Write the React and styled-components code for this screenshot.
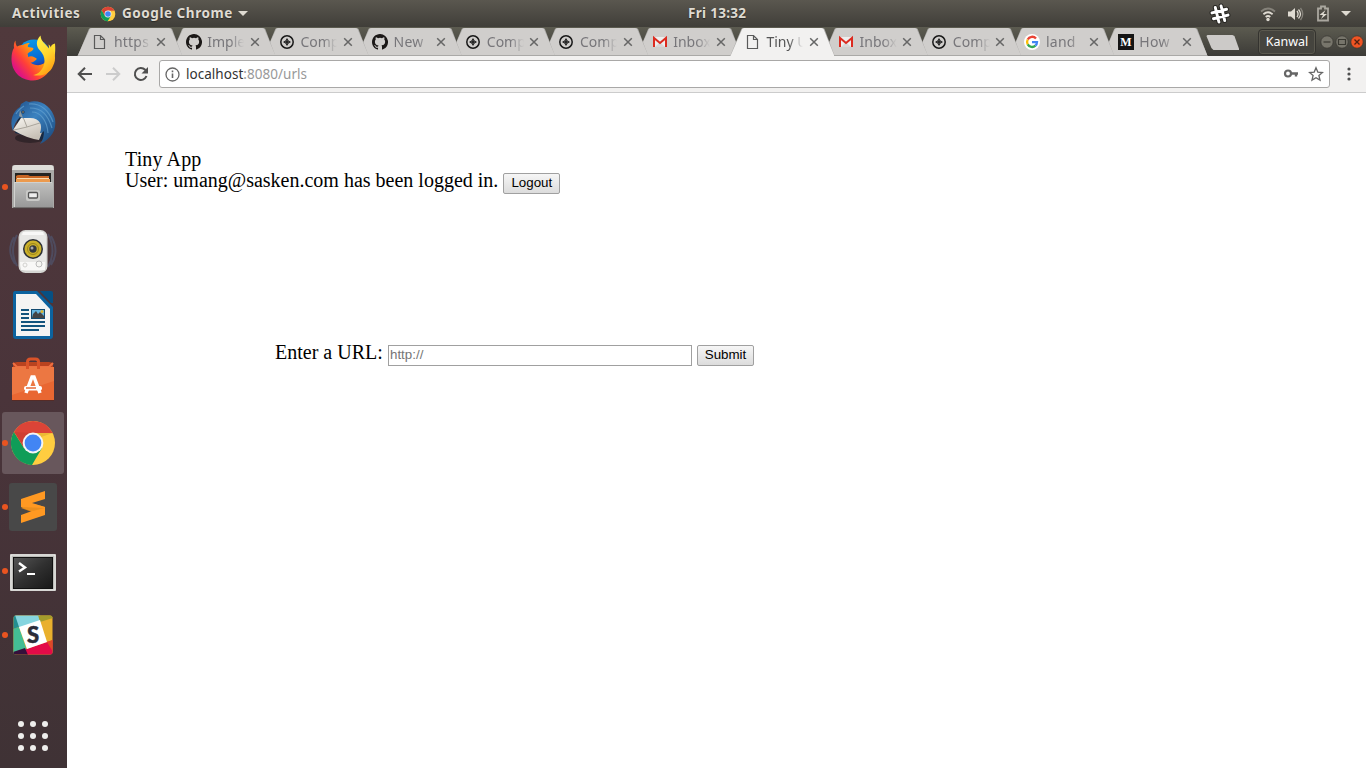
import React from 'react';
import styled, { createGlobalStyle } from 'styled-components';

const GlobalStyle = createGlobalStyle`
  * { box-sizing: border-box; }
  html, body { margin: 0; padding: 0; overflow: hidden; }
  svg { display: block; flex: none; }
`;

const Desktop = styled.div`
  width: 1366px;
  height: 768px;
  display: flex;
  flex-direction: column;
  font-family: "Noto Sans", "Open Sans", sans-serif;
  background: #fff;
`;

const TopBar = styled.header`
  height: 27px;
  flex: none;
  display: grid;
  grid-template-columns: 688px 60px 1fr;
  align-items: center;
  padding: 0 15px 0 0;
  background: linear-gradient(#5a574f, #403e39);
  color: #dfdbd2;
  font-size: 13.5px;
  font-weight: 700;
  line-height: 26px;
`;

const BarGroup = styled.div`
  display: flex;
  align-items: center;
  justify-content: ${p => (p.$end ? 'flex-end' : 'flex-start')};
  padding-left: ${p => (p.$end ? 0 : 12)}px;
`;

const BarLabel = styled.span`
  white-space: nowrap;
  width: ${p => p.$width}px;
  letter-spacing: ${p => p.$spacing || 0}px;
  margin-left: ${p => p.$left || 0}px;
  padding-bottom: 1px;
  text-shadow: 0 1px 1px #2a2925;
`;

const Arrow = styled.span`
  width: 0;
  height: 0;
  margin-left: ${p => p.$left}px;
  border: 5px solid transparent;
  border-top-color: #dfdbd2;
  border-bottom-width: 0;
`;

const IconSlot = styled.span`
  display: flex;
  margin-left: ${p => p.$left || 0}px;
`;

const Main = styled.div`
  flex: 1;
  display: flex;
  min-height: 0;
`;

const Dock = styled.nav`
  width: 67px;
  flex: none;
  display: flex;
  flex-direction: column;
  gap: 2px;
  padding: 1px 3px 0 2px;
  background: linear-gradient(#50393c, #4a343a 50%, #3f3235);
`;

const DockItem = styled.div`
  position: relative;
  width: 62px;
  height: 62px;
  display: flex;
  align-items: center;
  justify-content: center;
  border-radius: 3px;
  background: ${p => (p.$active ? '#68575c' : 'transparent')};
`;

const RunningDot = styled.span`
  position: absolute;
  left: 0;
  top: 28px;
  width: 6px;
  height: 6px;
  border-radius: 50%;
  background: #e95420;
`;

const AppsGrid = styled.div`
  display: grid;
  grid-template-columns: repeat(3, 6px);
  gap: 6px;
  margin: auto auto 17px 16px;
`;

const AppsDot = styled.span`
  width: 6px;
  height: 6px;
  border-radius: 50%;
  background: #eeeeec;
`;

const Browser = styled.section`
  flex: 1;
  min-width: 0;
  display: flex;
  flex-direction: column;
`;

const TabStrip = styled.div`
  height: 29px;
  flex: none;
  display: flex;
  padding: 1px 2px 0 10px;
  isolation: isolate;
  background: linear-gradient(#5c5b50, #3c3b37);
`;

const TabShape = styled.div`
  position: relative;
  width: 106px;
  height: 28px;
  flex: none;
  margin-right: -12.8px;
  padding: 0 0 0 15.3px;
  display: flex;
  align-items: center;
  z-index: ${p => p.$z};
  &::before, &::after {
    content: "";
    position: absolute;
    z-index: -1;
    inset: 0;
    background: #aaa9a7;
    clip-path: polygon(0 100%, 1px 97%, 12px 3%, 14px 0, 93px 0, 95px 3%, 105px 97%, 106px 100%);
  }
  &::after {
    inset: ${p => (p.$active ? '0 1px 0 1px' : '0 1px 1px 1px')};
    background: ${p => (p.$active ? '#f2f1f0' : '#d0cecc')};
    clip-path: polygon(0 100%, 12px 2%, 14px 0, 91px 0, 93px 3%, 104px 100%);
  }
`;

const TabTitle = styled.span`
  width: 37px;
  margin-left: 5.7px;
  padding-bottom: 1px;
  overflow: hidden;
  white-space: nowrap;
  font-size: 14px;
  line-height: 20px;
  letter-spacing: ${p => p.$spacing}px;
  color: ${p => (p.$active ? '#555' : '#77767a')};
  mask-image: linear-gradient(90deg, #000 62%, transparent 100%);
`;

const NewTab = styled.span`
  width: 33px;
  height: 15px;
  margin: 7px 0 0 11px;
  background: #cccac8;
  clip-path: polygon(0 1px, 1px 0, 26px 0, 28px 1px, 33px 15px, 7px 15px, 5px 13px);
`;

const WindowControls = styled.div`
  display: flex;
  align-items: center;
  gap: 1px;
  margin-left: auto;
`;

const ProfileButton = styled.div`
  width: 58px;
  height: 26px;
  margin-right: 3px;
  border: 1px solid #34332f;
  border-radius: 4px;
  box-shadow: inset 0 0 0 1px #5b594f;
  background: #45443e;
  color: #fff;
  font-size: 12.5px;
  line-height: 24px;
  text-align: center;
`;

const Toolbar = styled.div`
  height: 37px;
  flex: none;
  display: flex;
  align-items: center;
  padding: 0 10px;
  background: #f2f1f0;
  border-bottom: 1px solid #ccc;
`;

const Omnibox = styled.div`
  width: 1171px;
  height: 28px;
  margin-left: 10px;
  padding: 0 5px;
  display: flex;
  align-items: center;
  border: 1px solid #a9a8a7;
  border-radius: 3px;
  background: #fff;
`;

const Address = styled.span`
  flex: 1;
  margin-left: 6px;
  font-size: 13.5px;
  line-height: 20px;
  letter-spacing: 0.03px;
  color: #999;
  b { font-weight: 400; color: #333; }
`;

const Page = styled.main`
  flex: 1;
  padding: 56px 0 0 58px;
  background: #fff;
  color: #000;
  font-family: "Liberation Serif", serif;
  font-size: 20px;
`;

const TextLine = styled.div`
  height: 21px;
  line-height: 21px;
  display: flex;
  white-space: pre;
`;

const Heading = styled(TextLine)`
  letter-spacing: 0.12px;
`;

const UrlForm = styled.div`
  display: flex;
  height: 24px;
  margin: 151px 0 0 150px;
  line-height: 21px;
`;

const PlainButton = styled.button`
  width: 57px;
  height: 21px;
  margin: 3px 0 0 5px;
  padding: 0 0 2px;
  flex: none;
  border: 1px solid #a0a0a0;
  border-radius: 2px;
  background: linear-gradient(#f6f6f6, #dcdcdc);
  color: #000;
  font: 13.333px/17px "Liberation Sans", sans-serif;
`;

const UrlInput = styled.input`
  width: 304px;
  height: 21px;
  margin: 3px 0 0;
  padding: 0 1px 2px;
  border: 1px solid #a0a0a0;
  font: 13.333px "Liberation Sans", sans-serif;
  &::placeholder { color: #757575; }
`;

const FormLabel = styled.label`
  width: 113px;
`;

const ChromeLogo = ({ size }) => (
  <svg width={size} height={size} viewBox="0 0 48 48">
    <circle cx="24" cy="24" r="22" fill="#ffcd40" />
    <path d="M4.900 13A22 22 0 0 1 43.100 13L44 14H24L15 19Z" fill="#db4437" />
    <path d="M4.900 13A22 22 0 0 0 23 46L33 29 24 24 15 29Z" fill="#0f9d58" />
    <path d="M5 13 15 29V19L24 14Z" fill="#cf3f33" />
    <path d="M24 14h20l-12 4Z" fill="#d9a52a" opacity=".5" />
    <circle cx="24" cy="24" r="10.400" fill="#f5f5f5" />
    <circle cx="24" cy="24" r="8.400" fill="#4285f4" />
  </svg>
);

const Firefox = () => (
  <svg width="48" height="48" viewBox="0 0 48 48">
    <defs>
      <linearGradient id="ffBody" x1="0.9" y1="0.1" x2="0.1" y2="0.7">
        <stop offset="0" stopColor="#ffdf30" /><stop offset=".45" stopColor="#ff930f" />
        <stop offset=".75" stopColor="#ff4038" /><stop offset="1" stopColor="#e01580" />
      </linearGradient>
      <linearGradient id="ffBlue" x1="0" y1="0" x2=".3" y2="1">
        <stop offset="0" stopColor="#0aa2ea" /><stop offset=".7" stopColor="#0867d2" /><stop offset="1" stopColor="#3b1686" />
      </linearGradient>
      <linearGradient id="ffTail" x1=".2" y1="0" x2=".7" y2="1">
        <stop offset="0" stopColor="#fff44f" /><stop offset=".55" stopColor="#ffd52c" /><stop offset="1" stopColor="#ff9a12" />
      </linearGradient>
    </defs>
    <circle cx="25" cy="22" r="17.500" fill="url(#ffBlue)" />
    <path d="M6.500 5.500c0 3 .5 4.500 1.500 6q3-2 6-1.500c2-1.500 4.500-2 7-2-2 1.500-2.500 3-2 4 2 .8 4.500 0 5.500 1.500-.5 3-4.500 3-6 5.500 1 2 .5 3 .5 3 4-2 7 .5 9 2-2 1.500-3 3.500-6.500 3.500 5 4 13 4 17-3 4-8 1-15 7.500-16C48 29 38 45.500 24 45.500 11 45.500 2.500 36 2.500 24c0-5 1-9 2.500-11-.5-3 0-5.500 1.500-7.500Z" fill="url(#ffBody)" />
    <path d="M31.500.500c-5 5-4.500 11-.5 15 6 6 6 15 0 21-2 2-5 3.500-7 3.500 8 2 17-1 20-9 4-7 1.500-15-2-18.500-.5-1-1.500-2.500-2.500-3 .5 2 .5 3 .5 4C37 9 32 7 31.500.500Z" fill="url(#ffTail)" />
  </svg>
);

const Thunderbird = () => (
  <svg width="48" height="48" viewBox="0 0 48 48">
    <defs>
      <linearGradient id="bird" x1="0" y1="0" x2="1" y2="1"><stop offset="0" stopColor="#1e4e87" /><stop offset=".45" stopColor="#3b82c0" /><stop offset="1" stopColor="#174274" /></linearGradient>
      <linearGradient id="letter" x2=".5" y2="1"><stop offset="0" stopColor="#fffdf8" /><stop offset="1" stopColor="#c7c0b6" /></linearGradient>
    </defs>
    <ellipse cx="21" cy="39" rx="15" ry="5" fill="#241b20" opacity=".65" />
    <path d="m10 14 26-1 3 14-6 14L6 34Z" fill="#172a43" />
    <path d="M4 31 14 16q11-3 20 4l2 6-6 15Q17 39 4 31Z" fill="url(#letter)" />
    <path d="m14 18 4 10 16-5M18 28 5 31" stroke="#aaa59c" strokeWidth="1" fill="none" />
    <path d="M4 32C0 22 4 12 11 8l1-3 5-3 3 1C32 0 43 8 46 20c2 11-4 20-15 25 3-4 4-8 4-13-2 2-3 2-4 2 3-8 0-15-10-15l-7 0c-1 1-3-1-3-1-4 4-6 8-7 14Z" fill="url(#bird)" />
    <path d="M20 5c12-1 20 7 24 18M21 9c12 0 18 7 22 20M23 13c8 0 15 8 16 21M7 15c2-4 5-6 8-8" stroke="#68a5d1" strokeWidth="1.200" fill="none" opacity=".65" />
    <path d="m11 11 3 8-4-2Z" fill="#8b989e" /><circle cx="14" cy="13" r="1.500" fill="#142942" /><circle cx="14" cy="13" r=".7" fill="#e0c58b" />
  </svg>
);

const Files = () => (
  <svg width="48" height="48" viewBox="0 0 48 48">
    <defs><linearGradient id="cab" x2="0" y2="1"><stop stopColor="#c0c0be" /><stop offset="1" stopColor="#979797" /></linearGradient></defs>
    <path d="M3 4q0-2 3-2h36q3 0 3 2v41H3Z" fill="#aaa9a7" />
    <path d="M4 3q1-1 3-1h34q2 0 3 1l1 4H3Z" fill="#deddd9" />
    <path d="M6 10h36v10H6Z" fill="#242321" />
    <path d="M7 13q1-1 3-1h9l2 1h19v7H7Z" fill="#c96624" />
    <path d="M8 15h32v3H8Z" fill="#f9d9ac" /><path d="M7 16h34v4H7Z" fill="#ec9a4e" />
    <path d="M5 19h38l1 1v25H5Z" fill="url(#cab)" />
    <path d="M5 19.500h38M5.500 19v25" stroke="#d1d1cf" />
    <rect x="17" y="27" width="14" height="11" rx="2" fill="#c9c9c7" />
    <rect x="19.500" y="29.500" width="9" height="5.500" rx="1" fill="#eee" stroke="#555" strokeWidth="1.300" />
    <path d="M4 45h40" stroke="#4b4243" />
  </svg>
);

const Rhythmbox = () => (
  <svg width="48" height="48" viewBox="0 0 48 48">
    <g fill="none" stroke="#536b94" strokeWidth="2" opacity=".4"><path d="M5 10Q-3 24 6 37M8 8Q0 24 8 39M42 9q9 15 0 29M39 7q9 17 0 33" /></g>
    <rect x="9.500" y="3" width="29" height="43" rx="7" fill="#d5d6d3" />
    <rect x="11" y="4" width="26" height="40" rx="6" fill="#e7e7e5" />
    <path d="M14 5h20l1 3H13ZM11 35h25v8H12Z" fill="#f8f8f7" />
    <circle cx="24" cy="22" r="10" fill="#2c3036" />
    <circle cx="24" cy="22" r="8.500" fill="#cbb02a" />
    <circle cx="24" cy="22" r="5.500" fill="none" stroke="#9c861b" />
    <circle cx="24" cy="22" r="3.700" fill="#34383e" /><circle cx="23" cy="21" r="1.500" fill="#aaa" />
    <circle cx="30" cy="37" r="3" fill="#f5f5f2" stroke="#bbb" /><circle cx="16" cy="38" r="2" fill="none" stroke="#d2d2cf" />
  </svg>
);

const Writer = () => (
  <svg width="48" height="48" viewBox="0 0 48 48">
    <path d="M6 0h22l16 16v29q0 3-3 3H7q-3 0-3-3V3Q4 0 6 0Z" fill="#0c639f" />
    <path d="M31 0h11q2 0 2 2v10h-2Z" fill="#075083" />
    <path d="M7 3h20l14 15v27H7Z" fill="#f4f4f3" />
    <path d="M12 19h8M12 23h8M12 27h8M12 31h24M12 35h24M12 39h18" stroke="#12537c" strokeWidth="2" />
    <rect x="22" y="18" width="14" height="10" fill="#124a70" /><rect x="23" y="19" width="12" height="8" fill="#66b5df" />
    <path d="m23 27 1-4 3-3 2 3 2-2 4 4v2Z" fill="#444" /><circle cx="33" cy="20.500" r="1.500" fill="#ddb52e" />
  </svg>
);

const Software = () => (
  <svg width="48" height="48" viewBox="0 0 48 48">
    <path d="M4 8 8 7h32l4 1v5H4Z" fill="#b9431f" />
    <path d="m4 8 4 4h32l4-4" fill="none" stroke="#ef7042" strokeWidth="2" />
    <path d="M3 12h42v33H3Z" fill="#e96732" /><path d="M3 12h42v14L3 40Z" fill="#f08752" opacity=".5" />
    <path d="M18.500 14V7q0-3 3-3h5q3 0 3 3v7" fill="none" stroke="#d95329" strokeWidth="3" />
    <path d="m17 38 6-16h2l6 16" fill="none" stroke="#fff" strokeWidth="3.500" />
    <rect x="15" y="31" width="18" height="4.500" rx="2" fill="#fff" /><path d="M17 33h10" stroke="#e66b3b" strokeWidth="1.500" />
    <path d="M3 45.500h42" stroke="#562b26" />
  </svg>
);

const Sublime = () => (
  <svg width="48" height="48" viewBox="0 0 48 48">
    <rect width="48" height="48" rx="3" fill="#484848" />
    <path d="m12 25 11 4 13-4v-1l-11-3Z" fill="#df8519" />
    <path d="M12 16 36 8v8l-13 4 13 4v8l-24 8v-8l11-4-11-4Z" fill="#ff9922" />
    <path d="m12 24 24 1-12 3Z" fill="#e18a1d" opacity=".65" />
  </svg>
);

const Terminal = () => (
  <svg width="48" height="48" viewBox="0 0 48 48">
    <defs><linearGradient id="term" x2="1" y2="1"><stop stopColor="#555" /><stop offset=".5" stopColor="#303030" /><stop offset="1" stopColor="#171717" /></linearGradient></defs>
    <g transform="translate(0 1)">
      <rect x="1" y="6" width="46" height="37" rx="1" fill="#bdbdb9" />
      <rect x="2" y="7" width="44" height="35" fill="none" stroke="#f2f2f0" />
      <rect x="4.500" y="9.500" width="39" height="31" fill="url(#term)" stroke="#111" />
      <path d="m10 15 6 4.500-6 4" fill="none" stroke="#fff" strokeWidth="2.400" /><path d="M18 26h8" stroke="#fff" strokeWidth="2" />
    </g>
  </svg>
);

const SlackLetter = styled.text`
  font: 900 22px "Lato", sans-serif;
`;

const Slack = () => (
  <svg width="48" height="48" viewBox="0 0 48 48">
    <defs><clipPath id="slackClip"><rect x="4.500" y="4.500" width="39" height="39" rx="2.500" /></clipPath></defs>
    <g clipPath="url(#slackClip)">
      <path d="M4 4h40v40H4Z" fill="#e9b02d" />
      <path d="M4 4h27l2 6-23 7Z" fill="#86d5df" />
      <path d="m4 18 6-2 8 24-14 4Z" fill="#43bd94" />
      <path d="M4 4h2l4 12-6 2Z" fill="#238f91" />
      <path d="M29 4h15v3l-13 4Z" fill="#a39c2c" />
      <path d="m17 38 27-9v15H17Z" fill="#e30b48" />
      <path d="m4 41 12-4 3 7H4Z" fill="#35103b" />
      <path d="m38 31 6-2v12Z" fill="#dd4a27" />
      <path d="m10 16 21-7 7 22-20 7Z" fill="#fff" />
    </g>
    <SlackLetter x="24" y="31.500" textAnchor="middle" fill="#2b2c39" stroke="#2b2c39" strokeWidth=".5">S</SlackLetter>
  </svg>
);

const DocIcon = () => (
  <svg width="16" height="16" viewBox="0 0 16 16"><path d="M2.500 1.500h6l4 4v9h-10ZM8.500 1.500v4h4" fill="none" stroke="#5a5a5a" strokeWidth="1.200" /></svg>
);
const GithubIcon = () => (
  <svg width="16" height="16" viewBox="0 0 16 16"><path fill="#1b1817" d="M8 0C3.580 0 0 3.580 0 8c0 3.540 2.290 6.530 5.470 7.590.4.070.55-.17.55-.38v-1.490c-2.230.48-2.700-.95-2.700-.95-.36-.92-.89-1.170-.89-1.170-.73-.5.050-.49.050-.49.81.060 1.230.83 1.230.83.72 1.230 1.880.87 2.340.67.070-.52.280-.87.510-1.070-1.780-.2-3.640-.89-3.640-3.950 0-.87.31-1.590.82-2.150-.08-.2-.36-1.020.080-2.120 0 0 .67-.21 2.200.82a7.500 7.500 0 0 1 4 0c1.530-1.040 2.200-.82 2.200-.82.44 1.100.16 1.920.080 2.120.51.560.82 1.270.82 2.150 0 3.070-1.870 3.750-3.650 3.950.29.250.54.730.54 1.480v2.190c0 .21.150.46.550.38A8 8 0 0 0 8 0Z" /></svg>
);
const CompassIcon = () => (
  <svg width="16" height="16" viewBox="0 0 16 16"><circle cx="8" cy="8" r="6.200" fill="none" stroke="#181818" strokeWidth="1.500" /><path d="M8 4 9.500 6.500 12 8 9.500 9.500 8 12 6.500 9.500 4 8 6.500 6.500Z" fill="#181818" /><path d="M8 6v1.200M8 8.800V10M6 8h1.200M8.800 8H10" stroke="#aaa" strokeWidth=".6" /></svg>
);
const GmailIcon = () => (
  <svg width="16" height="16" viewBox="0 0 16 16"><path d="M2 3h12v10H2Z" fill="#eee" /><path d="m3 13 5-5 5 5" fill="#d7d7d7" /><path d="M2 13V4l6 5 6-5v9" fill="none" stroke="#dc2b20" strokeWidth="2" /></svg>
);
const GoogleIcon = () => (
  <svg width="16" height="16" viewBox="0 0 16 16"><circle cx="8" cy="8" r="8" fill="#fff" /><g fill="none" strokeWidth="2.300"><path d="M12 4.500A5 5 0 0 0 3.700 5.600" stroke="#ea4335" /><path d="M3.700 5.600a5 5 0 0 0 0 4.800" stroke="#fbbc05" /><path d="M3.700 10.400a5 5 0 0 0 7.700 1.300" stroke="#34a853" /><path d="M8 8.200h5a5 5 0 0 1-1.600 3.500" stroke="#4285f4" /></g></svg>
);
const MediumLetter = styled.text`
  font: 700 12px "Liberation Serif", serif;
`;
const MediumIcon = () => (
  <svg width="16" height="16" viewBox="0 0 16 16"><path d="M0 0h16v16H0Z" fill="#151515" /><MediumLetter x="8" y="12" textAnchor="middle" fill="#fff">M</MediumLetter></svg>
);
const CloseIcon = () => (
  <svg width="10" height="10" viewBox="0 0 10 10"><path d="m1.200 1.200 7.600 7.600m0-7.600L1.200 8.800" stroke="#666" strokeWidth="1.500" /></svg>
);

const favicons = { doc: DocIcon, github: GithubIcon, compass: CompassIcon, gmail: GmailIcon, google: GoogleIcon, medium: MediumIcon };

const tabs = [
  ['doc', 'https', 0.2], ['github', 'Imple', 0], ['compass', 'Comp', 0], ['github', 'New', 0.2],
  ['compass', 'Comp', 0], ['compass', 'Comp', 0], ['gmail', 'Inbox', 0], ['doc', 'Tiny U', 0, true],
  ['gmail', 'Inbox', 0], ['compass', 'Comp', 0], ['google', 'land', 0.2], ['medium', 'How', 0.3],
];

const dockItems = [
  { id: 'firefox', icon: <Firefox /> },
  { id: 'thunderbird', icon: <Thunderbird /> },
  { id: 'files', icon: <Files />, running: true },
  { id: 'rhythmbox', icon: <Rhythmbox /> },
  { id: 'writer', icon: <Writer /> },
  { id: 'software', icon: <Software /> },
  { id: 'chrome', icon: <ChromeLogo size={48} />, running: true, active: true },
  { id: 'sublime', icon: <Sublime />, running: true },
  { id: 'terminal', icon: <Terminal />, running: true },
  { id: 'slack', icon: <Slack />, running: true },
];

const Tab = ({ icon, title, spacing, active, z }) => {
  const Favicon = favicons[icon];
  return (
    <TabShape $active={active} $z={active ? 20 : z}>
      <Favicon />
      <TabTitle $active={active} $spacing={spacing}>{title}</TabTitle>
      <IconSlot $left={5.5}><CloseIcon /></IconSlot>
    </TabShape>
  );
};

const WindowButton = ({ kind }) => (
  <svg width="14" height="14" viewBox="0 0 14 14">
    <circle cx="7" cy="7" r="6.200" fill={kind === 'close' ? '#ef5423' : '#77756b'} stroke="#35342f" strokeWidth=".7" />
    {kind === 'min' && <path d="M3.500 7h7" stroke="#393831" strokeWidth="1.200" />}
    {kind === 'max' && <path d="M3.500 4.500h7v5h-7Z" fill="none" stroke="#393831" strokeWidth="1.200" />}
    {kind === 'close' && <path d="m4.500 4.500 5 5m0-5-5 5" stroke="#512011" strokeWidth="1.300" />}
  </svg>
);

export default function App() {
  return (
    <Desktop>
      <GlobalStyle />
      <TopBar>
        <BarGroup>
          <BarLabel $width={68} $spacing={0.58}>Activities</BarLabel>
          <IconSlot $left={20}><ChromeLogo size={16} /></IconSlot>
          <BarLabel $width={111} $left={6} $spacing={0.55}>Google Chrome</BarLabel>
          <Arrow $left={5} />
        </BarGroup>
        <BarLabel $width={60} $spacing={0.3}>Fri 13:32</BarLabel>
        <BarGroup $end>
          <svg width="22" height="22" viewBox="0 0 22 22"><g transform="rotate(-14 11 11)" fill="none" strokeLinecap="round"><path d="M8 3.500v15M14 3.500v15M3.500 8h15M3.500 14h15" stroke="#292824" strokeWidth="5" /><path d="M8 3.500v15M14 3.500v15M3.500 8h15M3.500 14h15" stroke="#fff" strokeWidth="2.900" /></g></svg>
          <IconSlot $left={29}>
            <svg width="16" height="16" viewBox="0 0 16 16"><g fill="none" strokeWidth="1.800"><path d="M1 5.500q7-6 14 0" stroke="#85827a" /><path d="M3.400 8.300q4.600-4 9.200 0M5.700 11q2.300-2 4.600 0" stroke="#dfdbd2" /></g><circle cx="8" cy="13.500" r="1.700" fill="#dfdbd2" /></svg>
          </IconSlot>
          <IconSlot $left={11}>
            <svg width="17" height="16" viewBox="0 0 17 16"><path d="M1 5.500h3L8 2v12L4 10.500H1Z" fill="#dfdbd2" /><g fill="none" strokeWidth="1.300"><path d="M10 5q2.200 3 0 6M11.500 3.500q4 4.500 0 9" stroke="#dfdbd2" /><path d="M13.500 2q4.500 6 0 12" stroke="#85827a" /></g></svg>
          </IconSlot>
          <IconSlot $left={12}>
            <svg width="14" height="18" viewBox="0 0 14 18"><path d="M2 3.500h3v-2h4v2h3v12H2Z" fill="none" stroke="#aaa79f" strokeWidth="1.800" /><path d="m9.500 5-6 5H7l-2 4 6-5H7.500Z" fill="#dfdbd2" /></svg>
          </IconSlot>
          <Arrow $left={11} />
        </BarGroup>
      </TopBar>
      <Main>
        <Dock>
          {dockItems.map(item => (
            <DockItem key={item.id} $active={item.active}>
              {item.icon}
              {item.running && <RunningDot />}
            </DockItem>
          ))}
          <AppsGrid>{Array.from({ length: 9 }, (_, i) => <AppsDot key={i} />)}</AppsGrid>
        </Dock>
        <Browser>
          <TabStrip>
            {tabs.map(([icon, title, spacing, active], i) => (
              <Tab key={i} icon={icon} title={title} spacing={spacing} active={active} z={12 - i} />
            ))}
            <NewTab />
            <WindowControls>
              <ProfileButton>Kanwal</ProfileButton>
              <WindowButton kind="min" />
              <WindowButton kind="max" />
              <WindowButton kind="close" />
            </WindowControls>
          </TabStrip>
          <Toolbar>
            <svg width="16" height="16" viewBox="0 0 16 16"><path d="M15 8H2.500M8 1.700 1.700 8 8 14.300" fill="none" stroke="#4f4f4f" strokeWidth="2" /></svg>
            <IconSlot $left={12}><svg width="16" height="16" viewBox="0 0 16 16"><path d="M1 8h12.500M8 1.700 14.300 8 8 14.300" fill="none" stroke="#ccc" strokeWidth="2" /></svg></IconSlot>
            <IconSlot $left={12}><svg width="16" height="16" viewBox="0 0 16 16"><path d="M13.500 10A6 6 0 1 1 12.200 3.800L14 5.500" fill="none" stroke="#4f4f4f" strokeWidth="2" /><path d="M15 1v6.500H8.500Z" fill="#4f4f4f" /></svg></IconSlot>
            <Omnibox>
              <svg width="15" height="15" viewBox="0 0 15 15"><circle cx="7.500" cy="7.500" r="6.500" fill="none" stroke="#666" strokeWidth="1.300" /><path d="M7.500 3.500v1.700M7.500 6.500V11" stroke="#666" strokeWidth="1.600" /></svg>
              <Address><b>localhost</b>:8080/urls</Address>
              <svg width="16" height="16" viewBox="0 0 16 16"><circle cx="5" cy="7.500" r="3" fill="none" stroke="#666" strokeWidth="2.200" /><path d="M8 7.500h7M13 7.500v3" stroke="#666" strokeWidth="2.400" /></svg>
              <IconSlot $left={9}><svg width="16" height="16" viewBox="0 0 16 16"><path d="m8 1.800 1.800 4.300 4.700.4-3.600 3 1.100 4.600L8 11.700l-4 2.400 1.100-4.600-3.600-3 4.700-.4Z" fill="none" stroke="#666" strokeWidth="1.300" /></svg></IconSlot>
            </Omnibox>
            <IconSlot $left={16.5}><svg width="4" height="14" viewBox="0 0 4 14"><g fill="#4f4f4f"><circle cx="2" cy="2" r="1.600" /><circle cx="2" cy="7" r="1.600" /><circle cx="2" cy="12" r="1.600" /></g></svg></IconSlot>
          </Toolbar>
          <Page>
            <Heading>Tiny App</Heading>
            <TextLine>User: umang@sasken.com has been logged in.<PlainButton>Logout</PlainButton></TextLine>
            <UrlForm>
              <FormLabel htmlFor="url">Enter a URL:</FormLabel>
              <UrlInput id="url" placeholder="http://" />
              <PlainButton>Submit</PlainButton>
            </UrlForm>
          </Page>
        </Browser>
      </Main>
    </Desktop>
  );
}
